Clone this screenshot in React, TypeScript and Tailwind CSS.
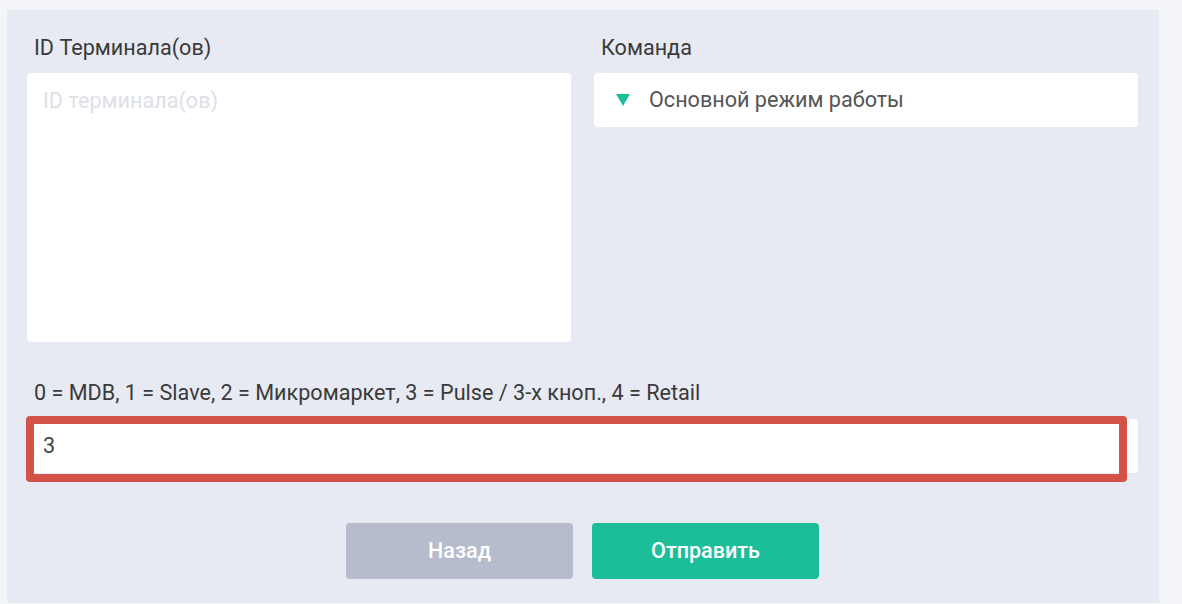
export default function App() {
  return (
    <div className="min-h-[604px] w-[1182px] bg-[#f4f5f9] pt-[10px] pl-[7px] font-['Roboto',sans-serif]">
      <div className="h-[593px] w-[1152px] bg-[#e7eaf2] pt-[25px] pr-[21px] pl-[20px]">
        <div className="flex gap-[23px]">
          {/* Terminals */}
          <div className="flex w-[544px] flex-col">
            <label className="mb-[12px] pl-[7px] text-[21.6px] leading-[26px] text-[#3a3a3a]">
              ID Терминала(ов)
            </label>
            <textarea
              readOnly
              placeholder="ID терминала(ов)"
              className="h-[269px] w-full resize-none rounded-[4px] bg-white px-[16px] pt-[14px] text-[21.6px] leading-[27px] text-[#3a3a3a] outline-none placeholder:text-[#dde0e8]"
            />
          </div>

          {/* Command */}
          <div className="flex w-[544px] flex-col">
            <label className="mb-[12px] pl-[7px] text-[21.6px] leading-[26px] text-[#3a3a3a]">
              Команда
            </label>
            <div className="flex h-[54px] items-center rounded-[4px] bg-white pl-[22px]">
              <svg width="14" height="12" viewBox="0 0 14 12" className="mr-[19px]">
                <path d="M0 0H14L7 12Z" fill="#1cbe9a" />
              </svg>
              <span className="text-[21.6px] text-[#555555]">Основной режим работы</span>
            </div>
          </div>
        </div>

        {/* Mode */}
        <div className="mt-[38px] flex flex-col">
          <label className="mb-[13px] pl-[7px] text-[21.6px] leading-[26px] text-[#3a3a3a]">
            0 = MDB, 1 = Slave, 2 = Микромаркет, 3 = Pulse / 3-х кноп., 4 = Retail
          </label>
          <div className="relative">
            <div className="flex h-[54px] items-center rounded-[4px] bg-white pl-[16px] text-[21.6px] text-[#444444]">
              3
            </div>
            <div className="pointer-events-none absolute top-[-3px] left-[-1px] h-[66px] w-[1101px] rounded-[4px] border-[8px] border-[#d35245]" />
          </div>
        </div>

        {/* Actions */}
        <div className="mt-[50px] flex justify-center gap-[19px]">
          <button className="h-[56px] w-[227px] rounded-[4px] bg-[#b6bccb] text-[21.6px] font-medium text-white">
            Назад
          </button>
          <button className="h-[56px] w-[227px] rounded-[4px] bg-[#1cbe9a] text-[21.6px] font-medium text-white">
            Отправить
          </button>
        </div>
      </div>
    </div>
  );
}
